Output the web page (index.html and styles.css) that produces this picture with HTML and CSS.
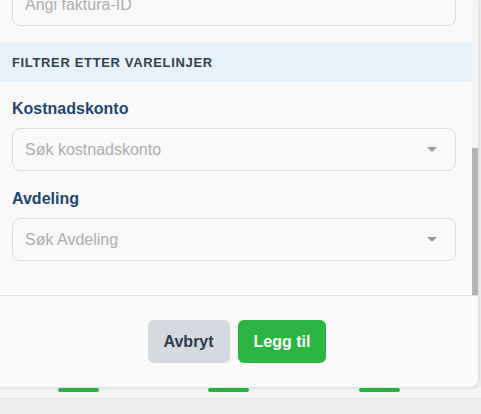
FILE: index.html
```html
<!DOCTYPE html>
<html lang="no">
<head>
<meta charset="utf-8">
<title>Filtrer</title>
<link rel="stylesheet" href="styles.css">
</head>
<body>
<div class="modal">
  <div class="modal-body">
    <div class="content">
      <div class="field scrolled">
        <div class="input"><span class="placeholder">Angi faktura-ID</span></div>
      </div>
      <div class="section-head">Filtrer etter varelinjer</div>
      <div class="field">
        <label class="label">Kostnadskonto</label>
        <div class="input select"><span class="placeholder">Søk kostnadskonto</span><span class="caret"></span></div>
      </div>
      <div class="field">
        <label class="label">Avdeling</label>
        <div class="input select"><span class="placeholder">Søk Avdeling</span><span class="caret"></span></div>
      </div>
    </div>
    <div class="scrollbar"><div class="thumb"></div></div>
  </div>
  <div class="modal-footer">
    <button class="btn btn-cancel">Avbryt</button>
    <button class="btn btn-add">Legg til</button>
  </div>
</div>
<div class="tabbar">
  <div class="tab"><span class="indicator"></span></div>
  <div class="tab"><span class="indicator"></span></div>
  <div class="tab"><span class="indicator"></span></div>
</div>
</body>
</html>
```
FILE: styles.css
```css
html, body {
  margin: 0;
  padding: 0;
}
body {
  width: 481px;
  height: 414px;
  overflow: hidden;
  background: #ececec;
  font-family: "Liberation Sans", Arial, sans-serif;
}
.modal {
  width: 478px;
  height: 387px;
  background: #f9f9f9;
  border-radius: 0 0 8px 0;
  box-shadow: 0 1px 4px rgba(0, 0, 0, 0.12);
  display: flex;
  flex-direction: column;
  overflow: hidden;
  position: relative;
  z-index: 1;
}
.modal-body {
  height: 295px;
  display: flex;
  overflow: hidden;
}
.content {
  flex: 1;
  display: flex;
  flex-direction: column;
}
.scrolled {
  margin-top: -17px;
}
.field {
  padding: 0 16px 0 12px;
  display: flex;
  flex-direction: column;
}
.label {
  margin-top: 18px;
  margin-bottom: 10px;
  font-size: 16px;
  line-height: 18px;
  font-weight: bold;
  color: #1f4571;
}
.field + .field .label {
  margin-top: 19px;
}
.input {
  box-sizing: border-box;
  height: 43px;
  border: 1px solid #dcdcdc;
  border-radius: 8px;
  background: #f9f9f9;
  display: flex;
  align-items: center;
  padding: 0 17px 0 12px;
}
.placeholder {
  flex: 1;
  font-size: 16px;
  color: #adadad;
}
.caret {
  width: 0;
  height: 0;
  border-left: 5px solid transparent;
  border-right: 5px solid transparent;
  border-top: 5px solid #9a9a9a;
  margin-right: 1px;
}
.section-head {
  margin-top: 17px;
  height: 39px;
  background: #e7f1f9;
  display: flex;
  align-items: center;
  padding-left: 12px;
  font-size: 13px;
  font-weight: bold;
  letter-spacing: 0.65px;
  text-transform: uppercase;
  color: #353f49;
}
.scrollbar {
  width: 6px;
  background: #f4f4f4;
}
.thumb {
  margin-top: 148px;
  height: 147px;
  background: #b3b3b3;
}
.modal-footer {
  flex: 1;
  border-top: 1px solid #e0e0e0;
  background: #fafafa;
  display: flex;
  align-items: center;
  justify-content: center;
  gap: 8px;
  padding-right: 4px;
}
.btn {
  height: 43px;
  padding: 0 16px;
  border: none;
  border-radius: 6px;
  font-family: "Liberation Sans", Arial, sans-serif;
  font-size: 16px;
  font-weight: bold;
}
.btn-cancel {
  background: #d4d9e0;
  color: #2d3b4e;
}
.btn-add {
  background: #2bb541;
  color: #ffffff;
}
.tabbar {
  height: 11px;
  background: #f4f4f4;
  border-bottom: 1px solid #e3e3e3;
  display: flex;
  padding-left: 3px;
}
.tab {
  width: 150.5px;
  display: flex;
  justify-content: center;
  align-items: flex-start;
}
.indicator {
  margin-top: 1px;
  width: 41px;
  height: 4px;
  border-radius: 2px;
  background: #2bb541;
}
```
